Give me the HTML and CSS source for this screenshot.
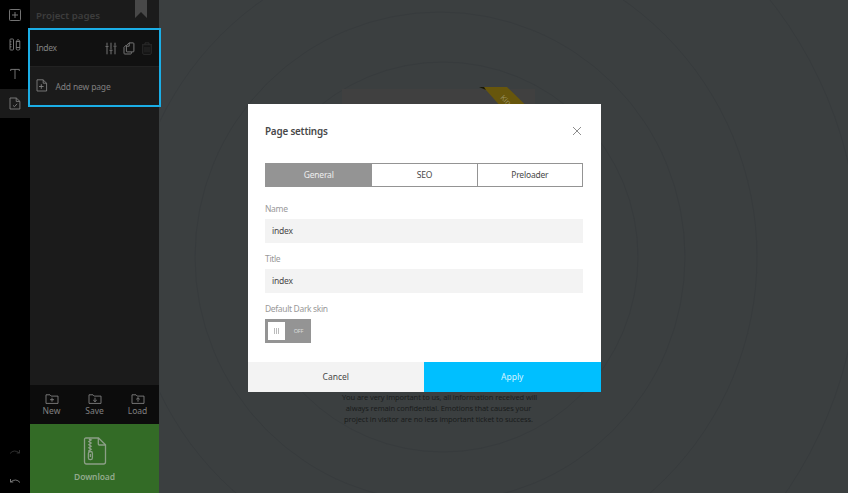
FILE: index.html
```html
<!DOCTYPE html>
<html lang="en">
<head>
<meta charset="utf-8">
<title>Page settings</title>
<link rel="stylesheet" href="styles.css">
</head>
<body>
<div class="app">
  <nav class="rail">
    <div class="rail-item"><svg width="12" height="12" viewBox="0 0 12 12"><rect x=".5" y=".5" width="11" height="11" rx=".8"/><path d="M6 3v6M3 6h6"/></svg></div>
    <div class="rail-item"><svg width="12" height="13" viewBox="0 0 12 13"><rect x="1" y="1" width="3.5" height="11" rx=".7"/><path d="M1 3.8h1.5M1 6.3h1.5M1 8.8h1.5M7.3 3Q9 0 10.8 3v7.7q0 1.3-1.2 1.3h-1.1q-1.2 0-1.2-1.3zM7.3 3.5h3.5M7.3 9.5h3.5"/></svg></div>
    <div class="rail-item"><svg width="12" height="12" viewBox="0 0 12 12"><path d="M1.7 3V1.4h8.6V3M6 1.4V11"/></svg></div>
    <div class="rail-item active"><svg width="12" height="13" viewBox="0 0 12 13"><path d="M1 1h6.3l3.6 3.4V12H1zM7.2 1v3.4h3.6M4 8.4l1.5 1.3 2.6-2.9"/></svg></div>
    <div class="history">
      <svg class="faint" width="12" height="6" viewBox="0 0 12 6"><path d="M1 4.5Q5-.2 10.5 4M10.5 1v3H7.7"/></svg>
      <svg width="12" height="6" viewBox="0 0 12 6"><path d="M11 4.5Q7-.2 1.5 4M1.5 1v3h2.8"/></svg>
    </div>
  </nav>
  <aside class="panel">
    <header class="panel-head"><h2>Project pages</h2><svg class="bookmark" width="12" height="18" viewBox="0 0 12 18"><path d="M0 0h12v18l-6-6-6 6z"/></svg></header>
    <div class="pages">
      <div class="page-row"><span class="page-name">Index</span>
        <svg width="12" height="13" viewBox="0 0 12 13"><path d="M2 .7v3M2 5v7.3M6 .7v6.8M6 9v3.3M10 .7v2.8M10 5v7.3M.5 4.4h3M4.5 8.3h3M8.5 4.2h3"/></svg>
        <svg width="12" height="13" viewBox="0 0 12 13"><path d="M3 3.2 1 5.4v5.8q0 .8.8.8h5.8q.8 0 .8-.8v-1M3.4 3.5 6 .9h4.1q.8 0 .8.8v7.4q0 .8-.8.8H4.2q-.8 0-.8-.8zM3.4 4.2h2.8V.9"/></svg>
        <svg class="trash" width="12" height="13" viewBox="0 0 12 13"><path d="M1.8 3.2v8.1q0 1 1 1h6.4q1 0 1-1V3.2M1 2.8h10M4 2.7V.9h4v1.8M4 4.7v5.8M6 4.7v5.8M8 4.7v5.8"/></svg>
      </div>
      <div class="add-row"><svg width="12" height="13" viewBox="0 0 12 13"><path d="M1 .8h6l3.6 3.4V12H1zM7.2.8v3.4h3.4M5.3 5.2v4.6M3 7.5h4.6"/></svg><span>Add new page</span></div>
      <div class="highlight"></div>
    </div>
    <div class="files">
      <div class="file"><svg width="14" height="10" viewBox="0 0 14 10"><path d="M1 9.4V.8h4l1.2 1.3H13v7.3zM7 3.7v4M5 5.7h4"/></svg><span>New</span></div>
      <div class="file"><svg width="14" height="10" viewBox="0 0 14 10"><path d="M1 9.4V.8h4l1.2 1.3H13v7.3zM7 3.7v4M5.2 6 7 7.7 8.8 6"/></svg><span>Save</span></div>
      <div class="file"><svg width="14" height="10" viewBox="0 0 14 10"><path d="M1 9.4V.8h4l1.2 1.3H13v7.3zM7 3.7v4M5.2 5.4 7 3.7l1.8 1.7"/></svg><span>Load</span></div>
    </div>
    <div class="download"><svg width="24" height="28" viewBox="0 0 24 28"><path d="M3 1h12.5l7 6.8V25q0 2-2 2h-17q-2 0-2-2V2.5Q1.5 1 3 1zM15.3 1v6q0 1 1 1h6"/><path class="zip" d="m6 2 2 1-2 1.6 2 1.5-2 1.6 2 1.5-2 1.6 2 1.5-2 1.5 1.3 1.3"/><rect x="5.4" y="14.5" width="4" height="8.2" rx="1.8"/><path d="M7.4 17v3"/></svg><span>Download</span></div>
  </aside>
  <main class="canvas">
    <svg class="rings" width="688" height="493" viewBox="160 0 688 493"><circle cx="443" cy="257" r="195"/><circle cx="440" cy="257" r="245"/><circle cx="443" cy="257" r="314"/><circle cx="443" cy="257" r="416"/></svg>
    <div class="sheet"></div>
    <svg class="ribbon" width="60" height="40" viewBox="0 0 60 40"><path d="M1 0h27l32 31v9H40L7 3z"/><path class="fold" d="M0 0h5l2 3z"/><text x="21" y="11" transform="rotate(45 21 11)">King</text></svg>
    <p class="note">You are very important to us, all information received will<br>always remain confidential. Emotions that causes your<br>project in visitor are no less important ticket to success.</p>
  </main>
</div>
<section class="modal">
  <div class="modal-body">
    <header class="modal-head"><h1>Page settings</h1><svg width="10" height="10" viewBox="0 0 10 10"><path d="m1 1 8 8M9 1 1 9"/></svg></header>
    <div class="tabs"><div class="tab selected">General</div><div class="tab">SEO</div><div class="tab">Preloader</div></div>
    <div class="field"><label>Name</label><div class="input">index</div></div>
    <div class="field"><label>Title</label><div class="input">index</div></div>
    <div class="field"><label>Default Dark skin</label><div class="switch"><span class="knob"><i></i><i></i><i></i></span><span class="off">OFF</span></div></div>
  </div>
  <footer class="actions"><div class="cancel">Cancel</div><div class="apply">Apply</div></footer>
</section>
</body>
</html>
```
FILE: styles.css
```css
* { box-sizing: border-box; }
body { margin: 0; overflow: hidden; background: #3b3f40; font: 8.5px/12px "Noto Sans", sans-serif; }
svg { display: block; flex: none; fill: none; stroke: #808080; stroke-width: .9; }
h1, h2, p { margin: 0; }
.app { display: grid; grid-template-columns: 30px 129px 1fr; height: 493px; }
.rail { display: flex; flex-direction: column; background: #000; }
.rail-item { height: 29.5px; display: grid; place-items: center; }
.rail-item.active { background: #1a1a1a; }
.history { margin-top: auto; padding: 0 0 9px 9px; display: grid; gap: 23px; }
.history .faint { stroke: #333; }
.panel { position: relative; z-index: 1; display: flex; flex-direction: column; background: #1b1b1b; color: #808080; }
.panel-head { height: 29px; display: flex; padding: 0 12px 0 6px; justify-content: space-between; }
.panel-head h2 { font-size: 9.7px; line-height: 32px; font-weight: 600; color: #3d3d3d; }
.bookmark { fill: #484848; stroke: none; }
.pages { position: relative; height: 78px; }
.page-row { height: 37px; display: flex; align-items: center; gap: 6px; padding: 1px 6px 0; background: #111; }
.page-name { margin-right: auto; letter-spacing: -.4px; }
.trash { stroke: #303030; }
.add-row { height: 41px; display: flex; align-items: center; padding-left: 5.5px; gap: 8px; border-top: 1px solid #222; letter-spacing: -.15px; }
.add-row svg { margin-top: -4px; }
.highlight { position: absolute; left: -2px; top: -1px; width: 133px; height: 79px; border: 2px solid #1baee6; }
.files { margin-top: auto; height: 39px; display: flex; padding-top: 9px; background: #0c0c0c; }
.file { flex: 1; display: flex; flex-direction: column; align-items: center; gap: 1px; }
.download { height: 69px; background: #336b26; color: #91a98c; font-weight: 600; letter-spacing: -.1px; display: flex; flex-direction: column; align-items: center; padding-top: 13px; gap: 6px; }
.download svg { stroke: #8c9f87; stroke-width: 1.3; }
.download .zip { stroke-width: 1.5; }
.canvas { position: relative; background: #3b3f40; padding: 392px 0 0 183px; }
.rings { position: absolute; left: 1px; top: 0; stroke: #373b3d; stroke-width: 1; }
.sheet { position: absolute; left: 183px; top: 89px; width: 193px; height: 303px; background: #404040; }
.ribbon { position: absolute; left: 320px; top: 87px; fill: #67560c; stroke: none; }
.ribbon .fold { fill: #181709; }
.ribbon text { fill: #97905f; font-size: 7.5px; }
.note { position: relative; width: 193px; text-align: center; white-space: nowrap; font: 400 7.5px/11.2px "Open Sans", sans-serif; letter-spacing: -.08px; color: #181a1a; }
.modal { position: absolute; left: 247.5px; top: 104px; width: 353px; height: 287px; background: #fff; color: #484848; display: flex; flex-direction: column; }
.modal-body { flex: 1; padding: 0 17.5px; letter-spacing: -.2px; }
.modal-head { height: 59px; padding: 0 1px 6px 0; display: flex; justify-content: space-between; align-items: center; }
.modal-head h1 { font-size: 9.9px; font-weight: 600; }
.tabs { display: grid; grid-template-columns: 1fr 1fr 1fr; height: 24px; border: 1px solid #949494; line-height: 22px; text-align: center; }
.tab + .tab { border-left: 1px solid #949494; }
.selected { background: #949494; color: #eee; }
.field { margin-top: 14px; }
.field + .field { margin-top: 8px; }
.field label { display: block; height: 18px; line-height: 16px; color: #999; letter-spacing: -.35px; }
.input { height: 24px; padding-left: 7px; line-height: 24px; background: #f3f3f3; }
.switch { width: 46px; height: 24px; padding: 3px; background: #949494; display: flex; align-items: center; }
.knob { width: 17px; height: 18px; background: #fff; display: flex; justify-content: center; align-items: center; gap: 1px; }
.knob i { width: 1px; height: 6px; background: #bbb; }
.off { flex: 1; padding-left: 4px; text-align: center; font-size: 5.6px; color: #ddd; }
.actions { display: grid; grid-template-columns: 1fr 1fr; height: 29px; line-height: 30px; text-align: center; }
.cancel { background: #f3f3f3; }
.apply { background: #00bfff; color: #d5f4ff; }
```
